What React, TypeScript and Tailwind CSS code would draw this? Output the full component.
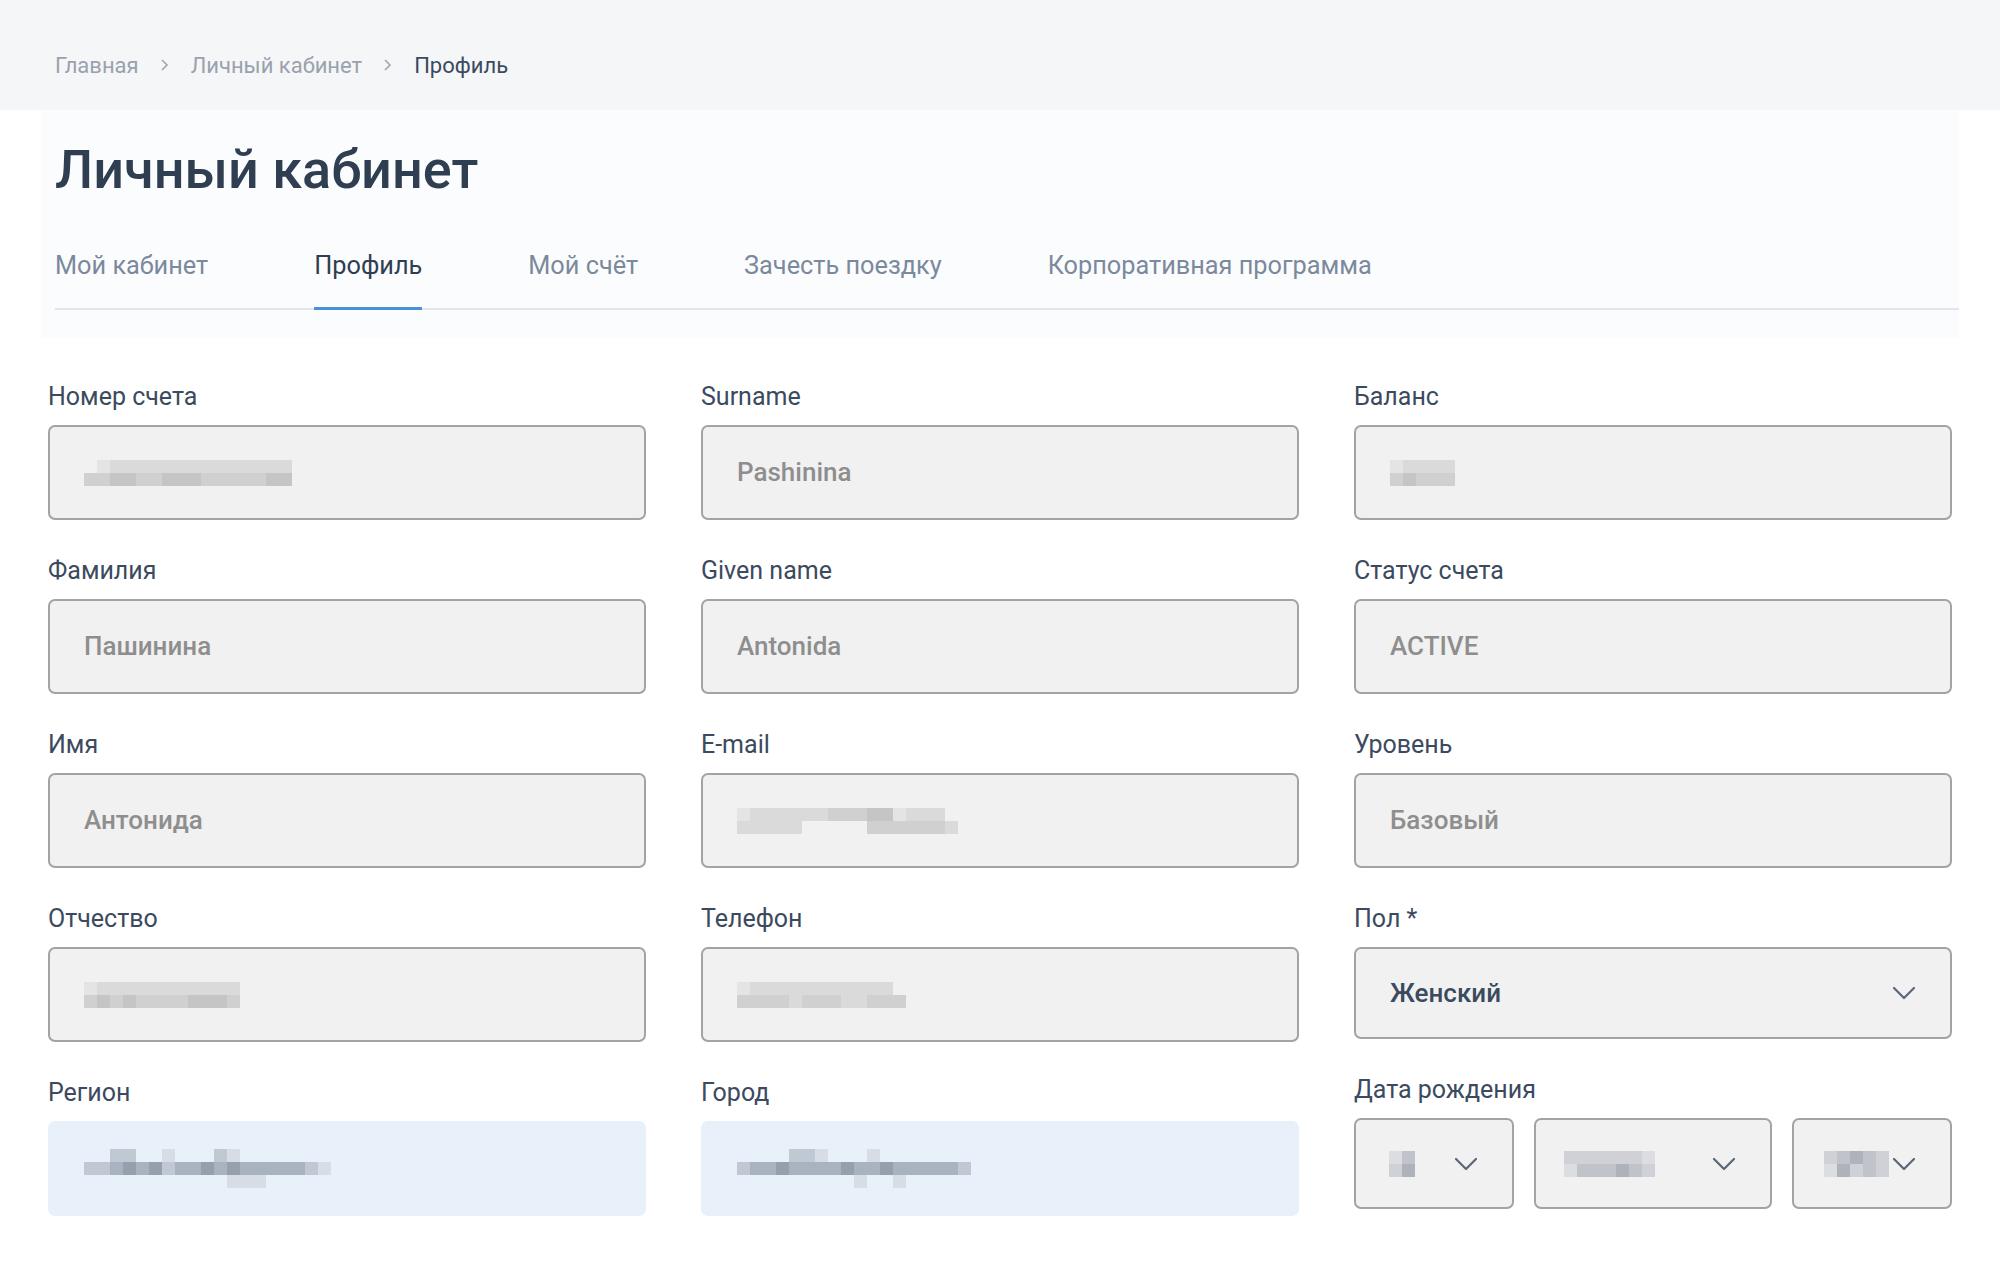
import React from "react";

const GRAY: Record<string, string> = {
  "0": "bg-transparent",
  "1": "bg-[#e4e4e4]",
  "2": "bg-[#dadada]",
  "3": "bg-[#d0d0d0]",
  "4": "bg-[#c5c5c5]",
};
const BLUE: Record<string, string> = {
  "0": "bg-transparent",
  "1": "bg-[#d6dde7]",
  "2": "bg-[#c0c8d3]",
  "3": "bg-[#a9b2bf]",
  "4": "bg-[#959fae]",
};
const SLATE: Record<string, string> = {
  "0": "bg-transparent",
  "1": "bg-[#dcdde1]",
  "2": "bg-[#cfd1d6]",
  "3": "bg-[#c0c3ca]",
  "4": "bg-[#aeb2ba]",
};

function Pix({ rows, tone }: { rows: string[]; tone: "gray" | "blue" | "slate" }) {
  const pal = tone === "gray" ? GRAY : tone === "blue" ? BLUE : SLATE;
  return (
    <div className="flex flex-col">
      {rows.map((r, i) => (
        <div key={i} className="flex">
          {r.split("").map((c, j) => (
            <div key={j} className={`w-[13px] h-[13px] ${pal[c]}`} />
          ))}
        </div>
      ))}
    </div>
  );
}

function Chevron({ className = "" }: { className?: string }) {
  return (
    <svg width="24" height="14" viewBox="0 0 24 14" className={className} fill="none">
      <path d="M2 2 L12 12 L22 2" stroke="#5b6778" strokeWidth="2.2" strokeLinecap="round" strokeLinejoin="round" />
    </svg>
  );
}

function Label({ children }: { children: React.ReactNode }) {
  return <div className="text-[25px] leading-[28px] text-[#3b4a5e] mb-[14px]">{children}</div>;
}

function Field({ label, value, pix }: { label: string; value?: string; pix?: string[] }) {
  return (
    <div className="flex flex-col">
      <Label>{label}</Label>
      <div className="h-[95px] rounded-[7px] border-2 border-[#a3a3a3] bg-[#f1f1f1] flex items-center pl-[34px]">
        {value ? (
          <span className="text-[26px] font-medium text-[#8e8e8e]">{value}</span>
        ) : (
          pix && <Pix rows={pix} tone="gray" />
        )}
      </div>
    </div>
  );
}

function BlueField({ label, pix }: { label: string; pix: string[] }) {
  return (
    <div className="flex flex-col">
      <Label>{label}</Label>
      <div className="h-[95px] rounded-[7px] bg-[#e8f0f9] flex items-center pl-[36px]">
        <Pix rows={pix} tone="blue" />
      </div>
    </div>
  );
}

function Crumb() {
  return (
    <svg width="10" height="14" viewBox="0 0 10 14" className="mx-[21px]" fill="none">
      <path d="M2 2 L7 7 L2 12" stroke="#a0a6b0" strokeWidth="1.6" />
    </svg>
  );
}

export default function App() {
  const tabs = ["Мой кабинет", "Профиль", "Мой счёт", "Зачесть поездку", "Корпоративная программа"];
  return (
    <div className="min-h-screen bg-white font-['Roboto',sans-serif]">
      <div className="h-[110px] bg-[#f5f6f8] flex items-center pl-[55px] pt-[20px] text-[22px]">
        <span className="text-[#9aa1ad]">Главная</span>
        <Crumb />
        <span className="text-[#9aa1ad]">Личный кабинет</span>
        <Crumb />
        <span className="text-[#3b4a5e]">Профиль</span>
      </div>

      <div className="ml-[41px] mr-[41px] bg-[#fbfcfd] pl-[14px] pb-[28px]">
        <div className="pt-[33px]">
          <h1 className="text-[54px] leading-none font-medium text-[#2f3e51]">Личный кабинет</h1>
        </div>
        <div className="mt-[54px] flex gap-[106px] border-b-2 border-[#e1e6ed]">
          {tabs.map((t) => (
            <div
              key={t}
              className={
                t === "Профиль"
                  ? "text-[25.3px] leading-[30px] pb-[26px] -mb-[2px] border-b-[3px] border-[#4a90d9] text-[#2f3e51]"
                  : "text-[25.3px] leading-[30px] pb-[26px] -mb-[2px] border-b-[3px] border-transparent text-[#7b899d]"
              }
            >
              {t}
            </div>
          ))}
        </div>
      </div>

      <div className="px-[48px] pt-[45px] grid grid-cols-3 gap-x-[55px]">
        <div className="flex flex-col gap-[37px]">
          <Field label="Номер счета" pix={["0122222222222222", "3344334443333344"]} />
          <Field label="Фамилия" value="Пашинина" />
          <Field label="Имя" value="Антонида" />
          <Field label="Отчество" pix={["122222222222", "343433334443"]} />
          <BlueField
            label="Регион"
            pix={["0022001000210000000", "2234342334343333321", "0000000000011100000"]}
          />
        </div>
        <div className="flex flex-col gap-[37px]">
          <Field label="Surname" value="Pashinina" />
          <Field label="Given name" value="Antonida" />
          <Field label="E-mail" pix={["12222223334412220", "22222000003333332"]} />
          <Field label="Телефон" pix={["1222222222220", "3333233322333"]} />
          <BlueField
            label="Город"
            pix={["000022100010000000", "233433334334333332", "000000000100100000"]}
          />
        </div>
        <div className="flex flex-col gap-[37px]">
          <Field label="Баланс" pix={["12222", "34333"]} />
          <Field label="Статус счета" value="ACTIVE" />
          <Field label="Уровень" value="Базовый" />
          <div className="flex flex-col">
            <Label>Пол *</Label>
            <div className="h-[92px] rounded-[7px] border-2 border-[#a3a3a3] bg-[#f1f1f1] flex items-center justify-between pl-[34px] pr-[34px]">
              <span className="text-[26px] font-medium text-[#3b4a5e]">Женский</span>
              <Chevron />
            </div>
          </div>
          <div className="flex flex-col">
            <Label>Дата рождения</Label>
            <div className="flex gap-[20px]">
              <div className="w-[160px] h-[91px] rounded-[7px] border-2 border-[#a3a3a3] bg-[#f1f1f1] flex items-center justify-between pl-[33px] pr-[34px]">
                <Pix rows={["13", "24"]} tone="slate" />
                <Chevron />
              </div>
              <div className="flex-1 h-[91px] rounded-[7px] border-2 border-[#a3a3a3] bg-[#f1f1f1] flex items-center justify-between pl-[28px] pr-[34px]">
                <Pix rows={["2222221", "1333432"]} tone="slate" />
                <Chevron />
              </div>
              <div className="w-[160px] h-[91px] rounded-[7px] border-2 border-[#a3a3a3] bg-[#f1f1f1] flex items-center justify-between pl-[30px] pr-[34px]">
                <Pix rows={["23432", "14232"]} tone="slate" />
                <Chevron />
              </div>
            </div>
          </div>
        </div>
      </div>
    </div>
  );
}
